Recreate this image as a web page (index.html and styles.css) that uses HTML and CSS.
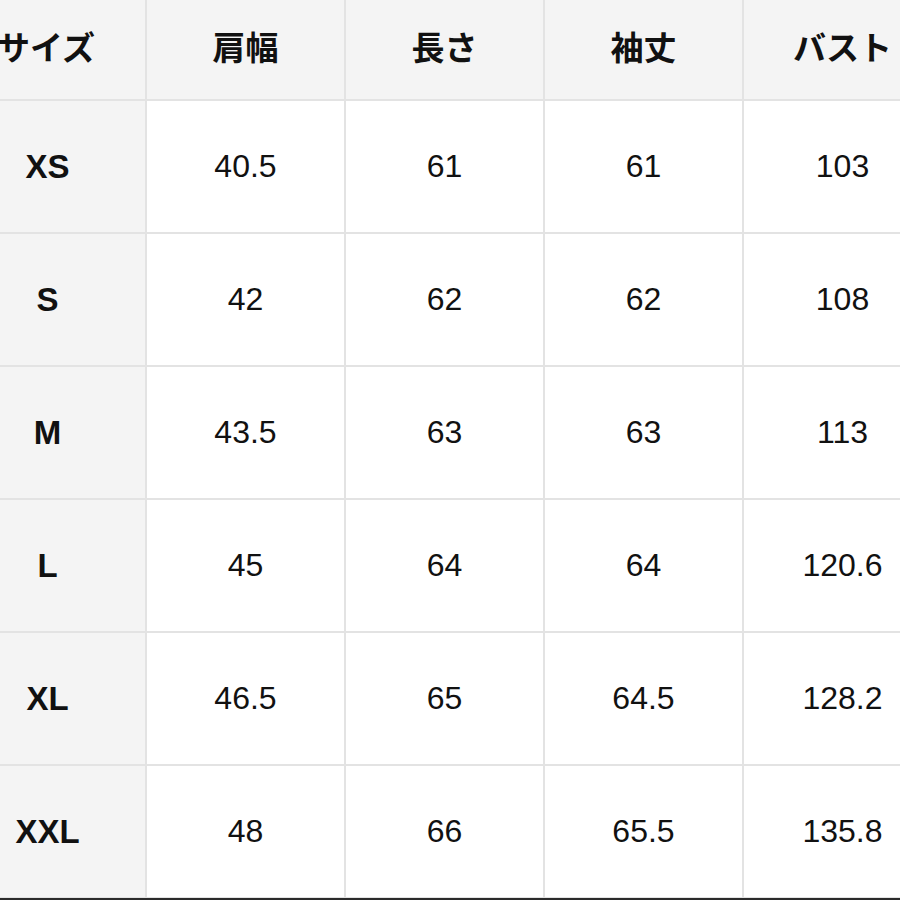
FILE: index.html
```html
<!DOCTYPE html>
<html lang="ja">
<head>
<meta charset="utf-8">
<title>サイズ表</title>
<link rel="stylesheet" href="styles.css">
</head>
<body>
<div class="page">
  <div class="table">
    <div class="cell head">サイズ</div>
    <div class="cell head">肩幅</div>
    <div class="cell head">長さ</div>
    <div class="cell head">袖丈</div>
    <div class="cell head">バスト</div>

    <div class="cell size">XS</div>
    <div class="cell">40.5</div>
    <div class="cell">61</div>
    <div class="cell">61</div>
    <div class="cell">103</div>

    <div class="cell size">S</div>
    <div class="cell">42</div>
    <div class="cell">62</div>
    <div class="cell">62</div>
    <div class="cell">108</div>

    <div class="cell size">M</div>
    <div class="cell">43.5</div>
    <div class="cell">63</div>
    <div class="cell">63</div>
    <div class="cell">113</div>

    <div class="cell size">L</div>
    <div class="cell">45</div>
    <div class="cell">64</div>
    <div class="cell">64</div>
    <div class="cell">120.6</div>

    <div class="cell size">XL</div>
    <div class="cell">46.5</div>
    <div class="cell">65</div>
    <div class="cell">64.5</div>
    <div class="cell">128.2</div>

    <div class="cell size">XXL</div>
    <div class="cell">48</div>
    <div class="cell">66</div>
    <div class="cell">65.5</div>
    <div class="cell">135.8</div>
  </div>
  <div class="edge"></div>
</div>
</body>
</html>
```
FILE: styles.css
```css
html, body {
  margin: 0;
  padding: 0;
  background: #ffffff;
  overflow: hidden;
}

.page {
  width: 900px;
  height: 900px;
  overflow: hidden;
  display: flex;
  flex-direction: column;
}

.table {
  display: grid;
  grid-template-columns: 198px 197px 197px 197px 197px;
  grid-template-rows: 99px repeat(6, 131px);
  column-gap: 2px;
  row-gap: 2px;
  background: #e3e3e3;
  margin-left: -53px;
  width: max-content;
  border-bottom: 1px solid #e3e3e3;
}

.cell {
  display: flex;
  align-items: center;
  justify-content: center;
  background: #ffffff;
  color: #111111;
  font-family: "Liberation Sans", Arial, sans-serif;
  font-size: 32px;
}

.head {
  background: #f4f4f4;
  font-family: "Noto Sans CJK JP", "Noto Sans", sans-serif;
  font-size: 33px;
  font-weight: 700;
  padding-bottom: 8px;
}

.size {
  background: #f4f4f4;
  font-size: 33px;
  font-weight: 700;
  padding-left: 3px;
}

.edge {
  height: 2px;
  background: #2b2b2b;
  flex-shrink: 0;
}
```
